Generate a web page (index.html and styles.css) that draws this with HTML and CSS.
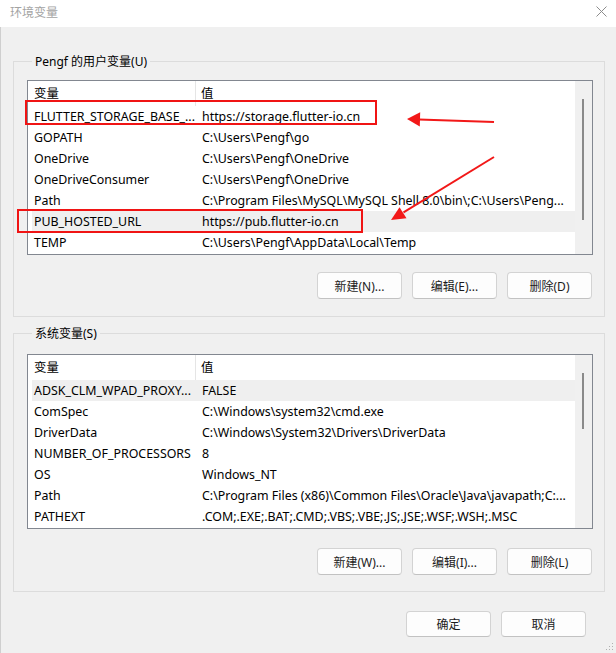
FILE: index.html
```html
<!DOCTYPE html>
<html lang="zh-CN">
<head>
<meta charset="utf-8">
<title>环境变量</title>
<link rel="stylesheet" href="styles.css">
</head>
<body>
<div class="window">
  <div class="titlebar">
    <span class="title">环境变量</span>
    <svg class="close" width="11" height="11" viewBox="0 0 11 11"><path d="M0.5 0.5 L10.5 10.5 M10.5 0.5 L0.5 10.5" stroke="#8c8c8c" stroke-width="1" fill="none"/></svg>
  </div>
  <div class="content">
    <div class="group g1">
      <div class="group-label">Pengf 的用户变量(U)</div>
      <div class="list">
        <div class="list-main">
          <div class="list-head"><div class="c1">变量</div><div class="c2">值</div></div>
          <div class="row"><div class="c1">FLUTTER_STORAGE_BASE_...</div><div class="c2">https://storage.flutter-io.cn</div></div>
          <div class="row"><div class="c1">GOPATH</div><div class="c2">C:\Users\Pengf\go</div></div>
          <div class="row"><div class="c1">OneDrive</div><div class="c2">C:\Users\Pengf\OneDrive</div></div>
          <div class="row"><div class="c1">OneDriveConsumer</div><div class="c2">C:\Users\Pengf\OneDrive</div></div>
          <div class="row"><div class="c1">Path</div><div class="c2">C:\Program Files\MySQL\MySQL Shell 8.0\bin\;C:\Users\Peng...</div></div>
          <div class="row selected"><div class="c1">PUB_HOSTED_URL</div><div class="c2">https://pub.flutter-io.cn</div></div>
          <div class="row"><div class="c1">TEMP</div><div class="c2">C:\Users\Pengf\AppData\Local\Temp</div></div>
        </div>
        <div class="scrollbar"><div class="thumb thumb1"></div></div>
      </div>
      <div class="btns">
        <button class="btn">新建(N)...</button>
        <button class="btn">编辑(E)...</button>
        <button class="btn">删除(D)</button>
      </div>
    </div>

    <div class="group g2">
      <div class="group-label">系统变量(S)</div>
      <div class="list">
        <div class="list-main">
          <div class="list-head"><div class="c1">变量</div><div class="c2">值</div></div>
          <div class="row selected"><div class="c1">ADSK_CLM_WPAD_PROXY...</div><div class="c2">FALSE</div></div>
          <div class="row"><div class="c1">ComSpec</div><div class="c2">C:\Windows\system32\cmd.exe</div></div>
          <div class="row"><div class="c1">DriverData</div><div class="c2">C:\Windows\System32\Drivers\DriverData</div></div>
          <div class="row"><div class="c1">NUMBER_OF_PROCESSORS</div><div class="c2">8</div></div>
          <div class="row"><div class="c1">OS</div><div class="c2">Windows_NT</div></div>
          <div class="row"><div class="c1">Path</div><div class="c2">C:\Program Files (x86)\Common Files\Oracle\Java\javapath;C:...</div></div>
          <div class="row"><div class="c1">PATHEXT</div><div class="c2">.COM;.EXE;.BAT;.CMD;.VBS;.VBE;.JS;.JSE;.WSF;.WSH;.MSC</div></div>
        </div>
        <div class="scrollbar"><div class="thumb thumb2"></div></div>
      </div>
      <div class="btns">
        <button class="btn">新建(W)...</button>
        <button class="btn">编辑(I)...</button>
        <button class="btn">删除(L)</button>
      </div>
    </div>

    <div class="dialog-btns">
      <button class="btn btn-dlg">确定</button>
      <button class="btn btn-dlg">取消</button>
    </div>
  </div>

  <div class="mark mark1"></div>
  <div class="mark mark2"></div>
  <svg class="annot" width="616" height="653" viewBox="0 0 616 653">
    <line x1="494" y1="122" x2="419" y2="119.5" stroke="#f21818" stroke-width="2"/>
    <polygon points="407,119 420.2,112.3 419.8,126.5" fill="#f21818"/>
    <line x1="494" y1="157" x2="403.5" y2="212.3" stroke="#f21818" stroke-width="2"/>
    <polygon points="391,220 399.5,207.3 406.5,218.3" fill="#f21818"/>
  </svg>
  <svg class="grip" width="8" height="8" viewBox="0 0 8 8">
    <rect x="6" y="0" width="1" height="1" fill="#b0b0b0"/>
    <rect x="3" y="3" width="1" height="1" fill="#b0b0b0"/>
    <rect x="6" y="3" width="1" height="1" fill="#b0b0b0"/>
    <rect x="0" y="6" width="1" height="1" fill="#b0b0b0"/>
    <rect x="3" y="6" width="1" height="1" fill="#b0b0b0"/>
    <rect x="6" y="6" width="1" height="1" fill="#b0b0b0"/>
  </svg>
</div>
</body>
</html>
```

FILE: styles.css
```css
* { box-sizing: border-box; }

html, body {
  margin: 0;
  padding: 0;
  background: #f0f0f0;
}

body {
  font-family: "Noto Sans", "Noto Sans CJK SC", sans-serif;
  font-size: 12px;
  color: #000;
}

.window {
  position: relative;
  width: 616px;
  height: 653px;
  background: #f0f0f0;
  box-shadow: inset 1px 0 0 #cfcfcf;
  overflow: hidden;
}

.titlebar {
  height: 27px;
  background: #fff;
  display: flex;
  align-items: flex-start;
  justify-content: space-between;
  padding: 4px 9px 0 10px;
}

.title {
  color: #a3a3a3;
  line-height: 16px;
  font-family: "Noto Sans CJK SC", sans-serif;
}

.close {
  display: block;
  margin-top: 2px;
}

.content {
  padding: 0 11px 0 13px;
}

.group {
  border: 1px solid #dcdcdc;
  padding: 0 11px 17px 13px;
}

.g1 { margin-top: 34px; }
.g2 { margin-top: 16px; padding-bottom: 16px; }

.group-label {
  width: fit-content;
  margin: -8px 0 0 5px;
  padding: 0 3px;
  line-height: 16px;
  background: #f0f0f0;
  white-space: nowrap;
}

.list {
  display: flex;
  border: 1px solid #828790;
  background: #fff;
  margin-top: 10px;
  font-size: 12.4px;
}

.g2 .list { margin-top: 12px; }

.list-main {
  flex: 1;
  min-width: 0;
  padding-bottom: 1px;
}

.list-head {
  display: grid;
  grid-template-columns: 168px 1fr;
  height: 25px;
  line-height: 25px;
}

.list-head .c1 {
  padding-left: 6px;
  border-right: 1px solid #e5e5e5;
}

.list-head .c2 {
  padding-left: 5px;
}

.row {
  display: grid;
  grid-template-columns: 164px 1fr;
  margin-left: 4px;
  height: 21px;
  line-height: 21px;
  white-space: nowrap;
}

.row .c1 {
  padding-left: 2px;
  overflow: hidden;
}

.row .c2 {
  padding-left: 6px;
  overflow: hidden;
}

.row.selected {
  background: #efefef;
}

.scrollbar {
  width: 17px;
  flex: none;
  background: #f0f0f0;
  padding: 18px 0 0 7px;
}

.thumb {
  width: 2px;
  background: #8a8a8a;
}

.thumb1 { height: 121px; }
.thumb2 { height: 56px; }

.btns {
  display: flex;
  justify-content: flex-end;
  gap: 10px;
  margin-top: 17px;
}

.g2 .btns { margin-top: 19px; }

.btn {
  width: 85px;
  height: 27px;
  margin: 0;
  padding: 0;
  font: inherit;
  color: #1b1b1b;
  background: #fdfdfd;
  border: 1px solid #d3d3d3;
  border-bottom-color: #c2c2c2;
  border-radius: 4px;
  font-family: "Noto Sans", "Noto Sans CJK SC", sans-serif;
}

.btns .btn:last-child { margin-right: 1px; }

.dialog-btns {
  display: flex;
  justify-content: flex-end;
  gap: 10px;
  margin-top: 19px;
  padding-right: 19px;
}

.btn-dlg {
  width: 85px;
  height: 26px;
}

.mark {
  position: absolute;
  border: 2px solid #f01414;
  pointer-events: none;
}

.mark1 {
  left: 25px;
  top: 100px;
  width: 352px;
  height: 25px;
}

.mark2 {
  left: 17px;
  top: 209px;
  width: 346px;
  height: 24px;
}

.annot {
  position: absolute;
  left: 0;
  top: 0;
  pointer-events: none;
}

.grip {
  position: absolute;
  right: 2px;
  bottom: 2px;
}
```
